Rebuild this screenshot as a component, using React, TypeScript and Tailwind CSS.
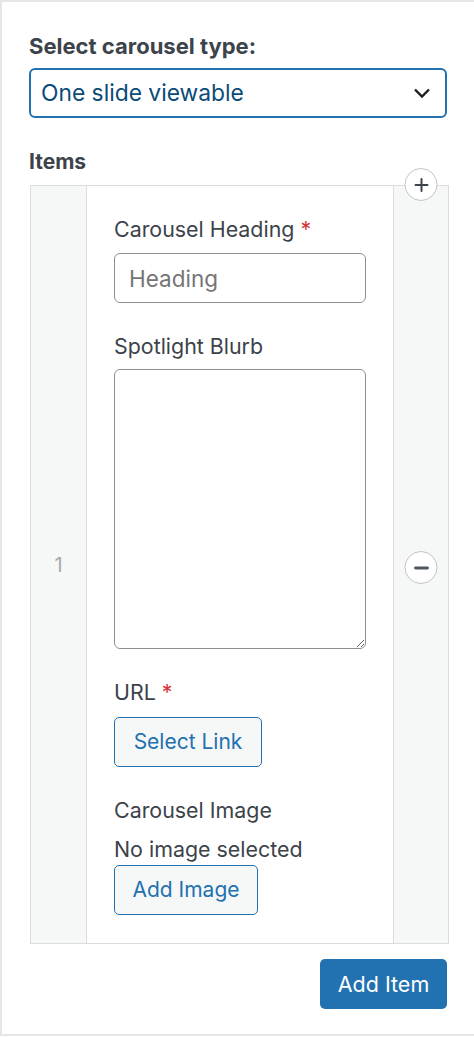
import React from 'react';

const font = { fontFamily: 'Inter, "Liberation Sans", sans-serif' };

function CircleButton({ minus }: { minus?: boolean }) {
  return (
    <button className="absolute left-1/2 -translate-x-1/2 w-[33px] h-[33px] rounded-full bg-white border border-[#c3c4c7] flex items-center justify-center">
      <svg width="16" height="16" viewBox="0 0 16 16" fill="none" stroke={minus ? '#50575e' : '#3c434a'} strokeWidth={minus ? 2.8 : 2}>
        <line x1="2" y1="8" x2="14" y2="8" strokeLinecap="round" />
        {!minus && <line x1="8" y1="2" x2="8" y2="14" strokeLinecap="round" />}
      </svg>
    </button>
  );
}

function Label({ children, required }: { children: React.ReactNode; required?: boolean }) {
  return (
    <div className="text-[21.4px] leading-[28px] text-[#3c434a]">
      {children}
      {required && <span className="text-[#d63638] ml-[6px]">*</span>}
    </div>
  );
}

export default function App() {
  return (
    <div style={font} className="min-h-[1037px] bg-white">
      <div className="border-t-2 border-l-2 border-b-2 border-[#e6e6e6] h-[1036px] pl-[27px] pr-[25px] pt-[30px]">
        <div className="text-[22px] leading-[28px] font-bold text-[#3c434a]">Select carousel type:</div>
        <div className="mt-[8px] h-[50px] w-[418px] border-2 border-[#2271b1] rounded-[6px] flex items-center justify-between pl-[10px] pr-[14px]">
          <span className="text-[22.8px] text-[#0a4b78]">One slide viewable</span>
          <svg width="18" height="12" viewBox="0 0 18 12" fill="none" stroke="#1e1e1e" strokeWidth="2.4">
            <path d="M2 2.5 L9 9.5 L16 2.5" />
          </svg>
        </div>

        <div className="mt-[30px] text-[21px] leading-[28px] font-bold text-[#3c434a]">Items</div>

        <div className="mt-[9px] ml-[1px] w-[419px] h-[759px] border border-[#dcdcde] flex">
          <div className="w-[56px] bg-[#f6f7f7] border-r border-[#dcdcde] flex items-center justify-center text-[20px] text-[#a7aaad]">
            1
          </div>
          <div className="flex-1 bg-white pl-[27px] pt-[29px]">
            <Label required>Carousel Heading</Label>
            <input
              placeholder="Heading"
              className="mt-[10px] w-[252px] h-[50px] border border-[#8c8f94] rounded-[6px] px-[14px] text-[22.5px] text-[#3c434a] placeholder:text-[#757575] outline-none"
            />

            <div className="mt-[29px]">
              <Label>Spotlight Blurb</Label>
            </div>
            <textarea className="mt-[9px] block w-[252px] h-[280px] border border-[#8c8f94] rounded-[6px] resize-y outline-none" />

            <div className="mt-[29px]">
              <Label required>URL</Label>
            </div>
            <button className="mt-[11px] h-[50px] w-[148px] bg-[#f6f7f7] border border-[#2271b1] rounded-[5px] text-[21px] text-[#2271b1]">
              Select Link
            </button>

            <div className="mt-[29px]">
              <Label>Carousel Image</Label>
            </div>
            <div className="mt-[11px]">
              <Label>No image selected</Label>
            </div>
            <button className="mt-[2px] h-[50px] w-[144px] bg-[#f6f7f7] border border-[#2271b1] rounded-[5px] text-[21px] text-[#2271b1]">
              Add Image
            </button>
          </div>
          <div className="relative w-[55px] bg-[#f6f7f7] border-l border-[#dcdcde]">
            <div className="absolute top-[-18px] left-0 right-0">
              <CircleButton />
            </div>
            <div className="absolute top-[365px] left-0 right-0">
              <CircleButton minus />
            </div>
          </div>
        </div>

        <div className="mt-[15px] flex justify-end pr-[2px]">
          <button className="h-[50px] w-[127px] bg-[#2271b1] rounded-[5px] text-[21.5px] text-white">Add Item</button>
        </div>
      </div>
    </div>
  );
}
